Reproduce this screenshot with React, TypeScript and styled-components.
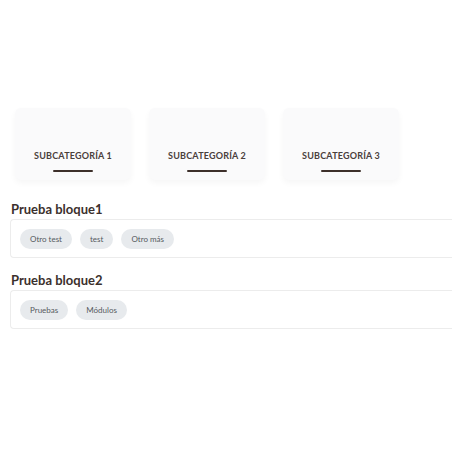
import React from 'react';
import styled, { createGlobalStyle } from 'styled-components';

const GlobalStyle = createGlobalStyle`
  html, body {
    margin: 0;
    padding: 0;
    background: #ffffff;
  }
  body {
    font-family: Lato, 'Noto Sans', Arial, sans-serif;
  }
`;

const Page = styled.div`
  width: 452px;
  height: 452px;
  padding: 108px 0 0 10px;
  box-sizing: border-box;
  overflow: hidden;
`;

const CardRow = styled.div`
  display: flex;
  gap: 18px;
  padding-left: 5px;
  margin-bottom: 21px;
`;

const Card = styled.div`
  width: 116px;
  height: 72px;
  box-sizing: border-box;
  background: #fafafb;
  border-radius: 6px;
  box-shadow: 0 3px 6px rgba(0, 0, 0, 0.04);
  display: flex;
  flex-direction: column;
  align-items: center;
  justify-content: flex-end;
  padding-bottom: 8px;
`;

const CardLabel = styled.div`
  font-size: 9px;
  font-weight: 700;
  letter-spacing: 0.2px;
  color: #4a403b;
  margin-bottom: 9px;
`;

const CardLine = styled.div`
  width: 40px;
  height: 2px;
  background: #3d302b;
  border-radius: 1px;
`;

const Section = styled.section`
  margin-bottom: 14px;
`;

const SectionTitle = styled.h3`
  margin: 0 0 2px 1px;
  font-size: 13px;
  line-height: 16px;
  font-weight: 700;
  color: #3b302c;
`;

// runs off the right edge in the reference, so no right border
const Block = styled.div`
  box-sizing: border-box;
  border: 1px solid #ececec;
  border-right: none;
  border-radius: 4px 0 0 4px;
  padding: 9px 9px 8px;
  display: flex;
  gap: 8px;
`;

const Chip = styled.span`
  display: inline-flex;
  align-items: center;
  height: 20px;
  padding: 0 10px;
  border-radius: 10px;
  background: #e7eaed;
  color: #555a5e;
  font-size: 8px;
`;

const categories = ['SUBCATEGORÍA 1', 'SUBCATEGORÍA 2', 'SUBCATEGORÍA 3'];

const blocks = [
  { title: 'Prueba bloque1', tags: ['Otro test', 'test', 'Otro más'] },
  { title: 'Prueba bloque2', tags: ['Pruebas', 'Módulos'] },
];

function App(): JSX.Element {
  return (
    <>
      <GlobalStyle />
      <Page>
        <CardRow>
          {categories.map(name => (
            <Card key={name}>
              <CardLabel>{name}</CardLabel>
              <CardLine />
            </Card>
          ))}
        </CardRow>
        {blocks.map(block => (
          <Section key={block.title}>
            <SectionTitle>{block.title}</SectionTitle>
            <Block>
              {block.tags.map(tag => (
                <Chip key={tag}>{tag}</Chip>
              ))}
            </Block>
          </Section>
        ))}
      </Page>
    </>
  );
}

export default App;
